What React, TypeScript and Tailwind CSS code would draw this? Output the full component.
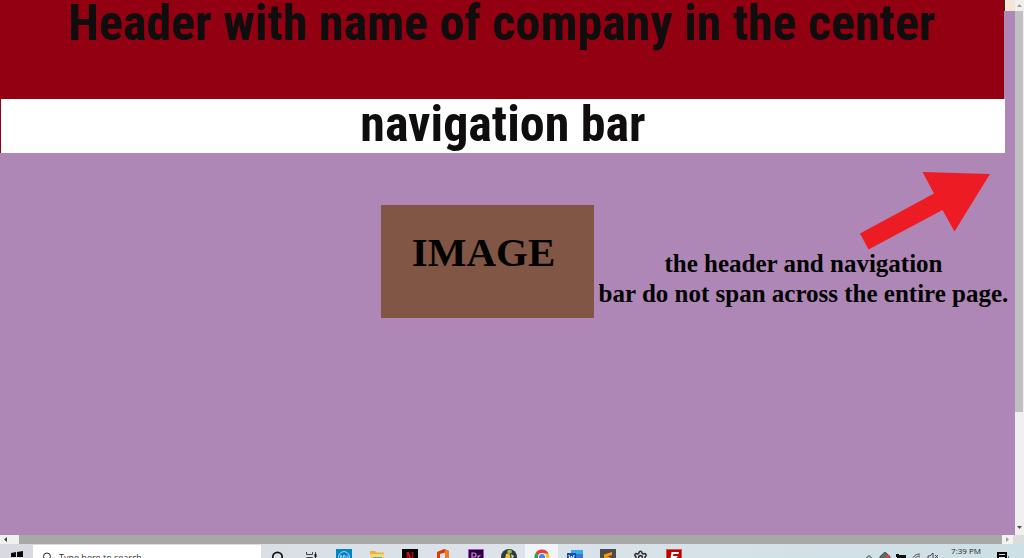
import type { ReactNode } from "react";
import { Settings } from "lucide-react";

const TITLE_FONT = "font-['Roboto_Condensed','Roboto',sans-serif]";

function Site() {
  return (
    <div className="min-w-0 flex-1 overflow-hidden bg-[#af87b7]">
      <div className="flex">
        <header className="h-[99px] flex-1 bg-[#930012]">
          <h1 className={`${TITLE_FONT} whitespace-nowrap text-center text-[50px] font-bold leading-[46px] text-[#0f0d0e]`}>
            Header with name of company in the center
          </h1>
        </header>
        {/* Sliver of the window behind the page */}
        <div className="h-[11px] w-[11px] border-l border-[#332a2a] bg-[#f3e6d6]" />
      </div>
      <nav className="mr-[10px] h-[54px] border-l border-[#930012] bg-white">
        <h2 className={`${TITLE_FONT} text-center text-[50px] font-bold leading-[50px] text-[#0f0d0e]`}>navigation bar</h2>
      </nav>

      <main className="flex justify-end gap-1 pr-[6px] pt-[18px] font-['Liberation_Serif',serif] font-bold text-[#020202]">
        <figure className="mt-[34px] h-[113px] w-[213px] shrink-0 bg-[#815644] pr-2 text-center text-[41px] leading-[94px]">
          IMAGE
        </figure>
        <div className="w-[411px] shrink-0">
          <svg viewBox="0 0 132 78" className="ml-auto mr-[19px] h-[78px] w-[132px] overflow-visible" aria-hidden="true">
            <path d="M64.500 1 132 3 96.500 60.500 84.500 39 10.500 78.500 2 62.500 76 22.500Z" fill="#ed1c24" />
          </svg>
          <p className="whitespace-nowrap text-center text-[25px] leading-[30px]">
            the header and navigation
            <br />
            bar do not span across the entire page.
          </p>
        </div>
      </main>
    </div>
  );
}

function Triangle({ d, fill }: { d: string; fill: string }) {
  return (
    <svg viewBox="0 0 5 5" className="h-[5px] w-[5px]" aria-hidden="true">
      <path d={d} fill={fill} />
    </svg>
  );
}

function VerticalScrollbar() {
  return (
    <div className="flex w-[9px] shrink-0 flex-col bg-[#f0f0f0]">
      <button aria-label="Scroll up" className="flex h-[11px] items-center justify-center">
        <Triangle d="M0 4 2.500 1 5 4Z" fill="#a0a0a0" />
      </button>
      <div className="mr-px h-3/4 bg-[#c0c0c0]" />
      <button aria-label="Scroll down" className="mt-auto flex h-[15px] items-center justify-center">
        <Triangle d="M0 1 2.500 4 5 1Z" fill="#505050" />
      </button>
    </div>
  );
}

function HorizontalScrollbar() {
  return (
    <div className="flex h-[9px] shrink-0 bg-[#a8a8a8]">
      <button aria-label="Scroll left" className="flex w-[19px] items-center bg-[#f0f0f0] pl-[3px]">
        <Triangle d="M4 0 1 2.500 4 5Z" fill="#404040" />
      </button>
      <button aria-label="Scroll right" className="ml-auto flex w-[11px] items-center justify-center bg-[#f3f3f3]">
        <Triangle d="M1 0 4 2.500 1 5Z" fill="#a0a0a0" />
      </button>
      <div className="w-[11px] bg-[#dcdcdc]" />
    </div>
  );
}

function Icon({ children }: { children: ReactNode }) {
  return (
    <svg viewBox="0 0 16 16" className="h-4 w-4" aria-hidden="true">
      {children}
    </svg>
  );
}

const apps: { name: string; active?: boolean; icon: ReactNode }[] = [
  {
    name: "Cortana",
    icon: <Icon><circle cx="7.500" cy="8" r="4.700" fill="none" stroke="#111" strokeWidth="1.700" /></Icon>,
  },
  {
    name: "Task view",
    icon: (
      <Icon>
        <path d="M3.500 3v2.500h6V3M3.500 14V8.500h6V14M12.500 3v11" fill="none" stroke="#444" />
        <path d="M11.500 5h2v3h-2z" fill="#111" />
      </Icon>
    ),
  },
  {
    name: "Dell",
    icon: (
      <Icon>
        <path d="M0 0h16v16H0z" fill="#0085c3" />
        <circle cx="8" cy="8" r="5.400" fill="none" stroke="#d4ecf7" strokeWidth=".8" />
        <path d="M4.500 6.500v3h1q1-1.500 0-3zM9 6.500H7.500v3H9M7.500 8H9M10 6.500v3h1M11.800 6.500v3" fill="none" stroke="#d4ecf7" strokeWidth=".7" />
      </Icon>
    ),
  },
  {
    name: "File Explorer",
    icon: (
      <Icon>
        <path d="M1 2h5l1.500 1.500H15V14H1z" fill="#e9b13b" />
        <path d="M1 5h14v9H1z" fill="#ffd768" />
        <path d="M4 8h9v6H4z" fill="#5aa7d6" />
      </Icon>
    ),
  },
  {
    name: "Netflix",
    icon: (
      <Icon>
        <path d="M0 0h16v16H0z" fill="#050505" />
        <path d="M5.500 3v10M10.500 3v10" stroke="#a30911" strokeWidth="1.800" />
        <path d="M4.600 3h2l4.800 10h-2z" fill="#e50914" />
      </Icon>
    ),
  },
  {
    name: "Office",
    icon: (
      <Icon>
        <path d="M9 0 2 3v9l3-1.500V5L10 3.500V14l-8-1 7 3 5-2V2z" fill="#d83b01" />
        <path d="M10 0v16l4-2V2z" fill="#f47721" />
      </Icon>
    ),
  },
  {
    name: "Premiere Pro",
    icon: (
      <Icon>
        <path d="M.5.5h15v15H.5z" fill="#250032" stroke="#b23fd0" />
        <path d="M4 12V4h2q2 0 2 2t-2 2H4M10 12V6.500M10 8q1-1.500 2.500-1.300" fill="none" stroke="#df80f2" strokeWidth="1.200" />
      </Icon>
    ),
  },
  {
    name: "FL Studio",
    icon: (
      <Icon>
        <circle cx="8" cy="8" r="8" fill="#303a38" />
        <path d="M7 1q4-1 4 2.500L8 5 6 3z" fill="#8bc34a" />
        <path d="M5 5q3-2 4 1l1 5-4 3-2-4z" fill="#f4b942" />
        <path d="M10 5l3 2-2 4z" fill="#c8d8bd" />
      </Icon>
    ),
  },
  {
    name: "Chrome",
    active: true,
    icon: (
      <Icon>
        <circle cx="8" cy="8" r="7.500" fill="#f9c22e" />
        <path d="M8 8 1.500 4.200A7.500 7.500 0 0 1 14.500 4.500H8z" fill="#e5433a" />
        <path d="M8 8 1.500 4.200A7.500 7.500 0 0 0 7.500 15.500l3-6z" fill="#2da44f" />
        <circle cx="8" cy="8" r="4" fill="#fff" />
        <circle cx="8" cy="8" r="3" fill="#4285f4" />
      </Icon>
    ),
  },
  {
    name: "Word",
    icon: (
      <Icon>
        <path d="M4 1h12v5H4z" fill="#41a5ee" />
        <path d="M4 5h12v5H4z" fill="#2b7cd3" />
        <path d="M4 9h12v6H4z" fill="#185abd" />
        <path d="M0 4h9v9H0z" fill="#174ea6" />
        <path d="m2 6 1 5 1.500-4L6 11l1-5" fill="none" stroke="#fff" />
      </Icon>
    ),
  },
  {
    name: "Sublime Text",
    icon: (
      <Icon>
        <path d="M0 0h16v16H0z" fill="#4b4b4b" />
        <path d="M12 3v3L7 7.500l5 1.500v3l-8 2.500v-3L9 10 4 8.500v-3z" fill="#ff9800" />
      </Icon>
    ),
  },
  { name: "Settings", icon: <Settings className="h-[15px] w-[15px] text-[#333]" strokeWidth={2.5} /> },
  {
    name: "FileZilla",
    icon: (
      <Icon>
        <path d="M0 0h16v16H0z" fill="#bf0000" />
        <path d="M.5.5h15v15H.5z" fill="none" stroke="#e9a0a0" strokeDasharray="1 1" />
        <path d="M4 13 5.500 3H13l-.5 2H7.500L7 7h5l-4 5h4v2H5l3-5H6.500L6 13z" fill="#fff" />
      </Icon>
    ),
  },
];

function TrayIcon({ children }: { children: ReactNode }) {
  return (
    <svg viewBox="0 0 12 12" className="h-3 w-3" fill="none" stroke="#222" aria-hidden="true">
      {children}
    </svg>
  );
}

function Taskbar() {
  return (
    <footer className="h-[14px] shrink-0 overflow-hidden bg-linear-to-r from-[#d7dbe1] via-[#dce3ea] to-[#cce0e5]">
      <div className="flex h-[26px] items-center">
        <button aria-label="Start" className="flex w-[33px] justify-center">
          <svg viewBox="0 0 12 12" className="h-3 w-3" aria-hidden="true">
            <path d="M0 2 5 1v5H0zM6 1l6-1v6H6zM0 7h5v4l-5-1zM6 7h6v5l-6-1z" fill="#080808" />
          </svg>
        </button>
        <label className="mt-px flex h-[25px] w-[228px] items-center gap-2 bg-white pl-[9px]">
          <svg viewBox="0 0 9 12" className="h-3 w-[9px] shrink-0" aria-hidden="true">
            <circle cx="5" cy="4.500" r="3.500" fill="none" stroke="#222" />
            <path d="M3 7.500 0 12" stroke="#222" />
          </svg>
          <input
            aria-label="Search"
            placeholder="Type here to search"
            className="min-w-0 flex-1 font-['Open_Sans',sans-serif] text-[9px] leading-[14px] outline-none placeholder:text-[#333]"
          />
        </label>
        {apps.map((app) => (
          <button
            key={app.name}
            aria-label={app.name}
            className={`flex h-full w-[33px] shrink-0 items-center justify-center ${app.active ? "bg-[#f1f4f8]" : ""}`}
          >
            {app.icon}
          </button>
        ))}
        <div className="ml-auto flex h-full shrink-0 items-center pr-[14px] text-[#222]">
          <div className="flex items-center gap-1">
            <TrayIcon>
              <path d="m3 7.500 3-3 3 3" />
            </TrayIcon>
            <TrayIcon>
              <path d="M1 8Q0 5 3 4q3-5 6 0 3 1 2 4z" fill="#666" stroke="#444" />
              <circle cx="9" cy="6" r="2" fill="#d6464b" stroke="none" />
            </TrayIcon>
            <TrayIcon>
              <path d="M1 3h3v1h7v6H2V6H1z" fill="#111" stroke="none" />
            </TrayIcon>
            <TrayIcon>
              <path d="M2 9q0-6 7-6M4 9q0-4 5-4M6 9q0-2 3-2" stroke="#555" />
            </TrayIcon>
            <TrayIcon>
              <path d="M1 5h2l3-3v8L3 8H1zM8 4l3 3M11 4 8 7" strokeWidth=".8" />
            </TrayIcon>
          </div>
          <time className="ml-3 self-start whitespace-nowrap font-['Open_Sans',sans-serif] text-[8px] leading-[14px]">
            7:39 PM
          </time>
          <svg viewBox="0 0 13 13" className="ml-4 h-[13px] w-[13px]" aria-hidden="true">
            <path d="M0 1h10v8H7l-3 3v-3H0z" fill="#050505" />
            <path d="M2 3.500h6M2 6.500h6" stroke="#d6e4e7" />
            <path d="M11.500 5v6H8" fill="none" stroke="#777" />
          </svg>
        </div>
      </div>
    </footer>
  );
}

export default function App() {
  return (
    <div className="flex h-screen flex-col overflow-hidden">
      <div className="flex min-h-0 flex-1">
        <Site />
        <VerticalScrollbar />
      </div>
      <HorizontalScrollbar />
      <Taskbar />
    </div>
  );
}
